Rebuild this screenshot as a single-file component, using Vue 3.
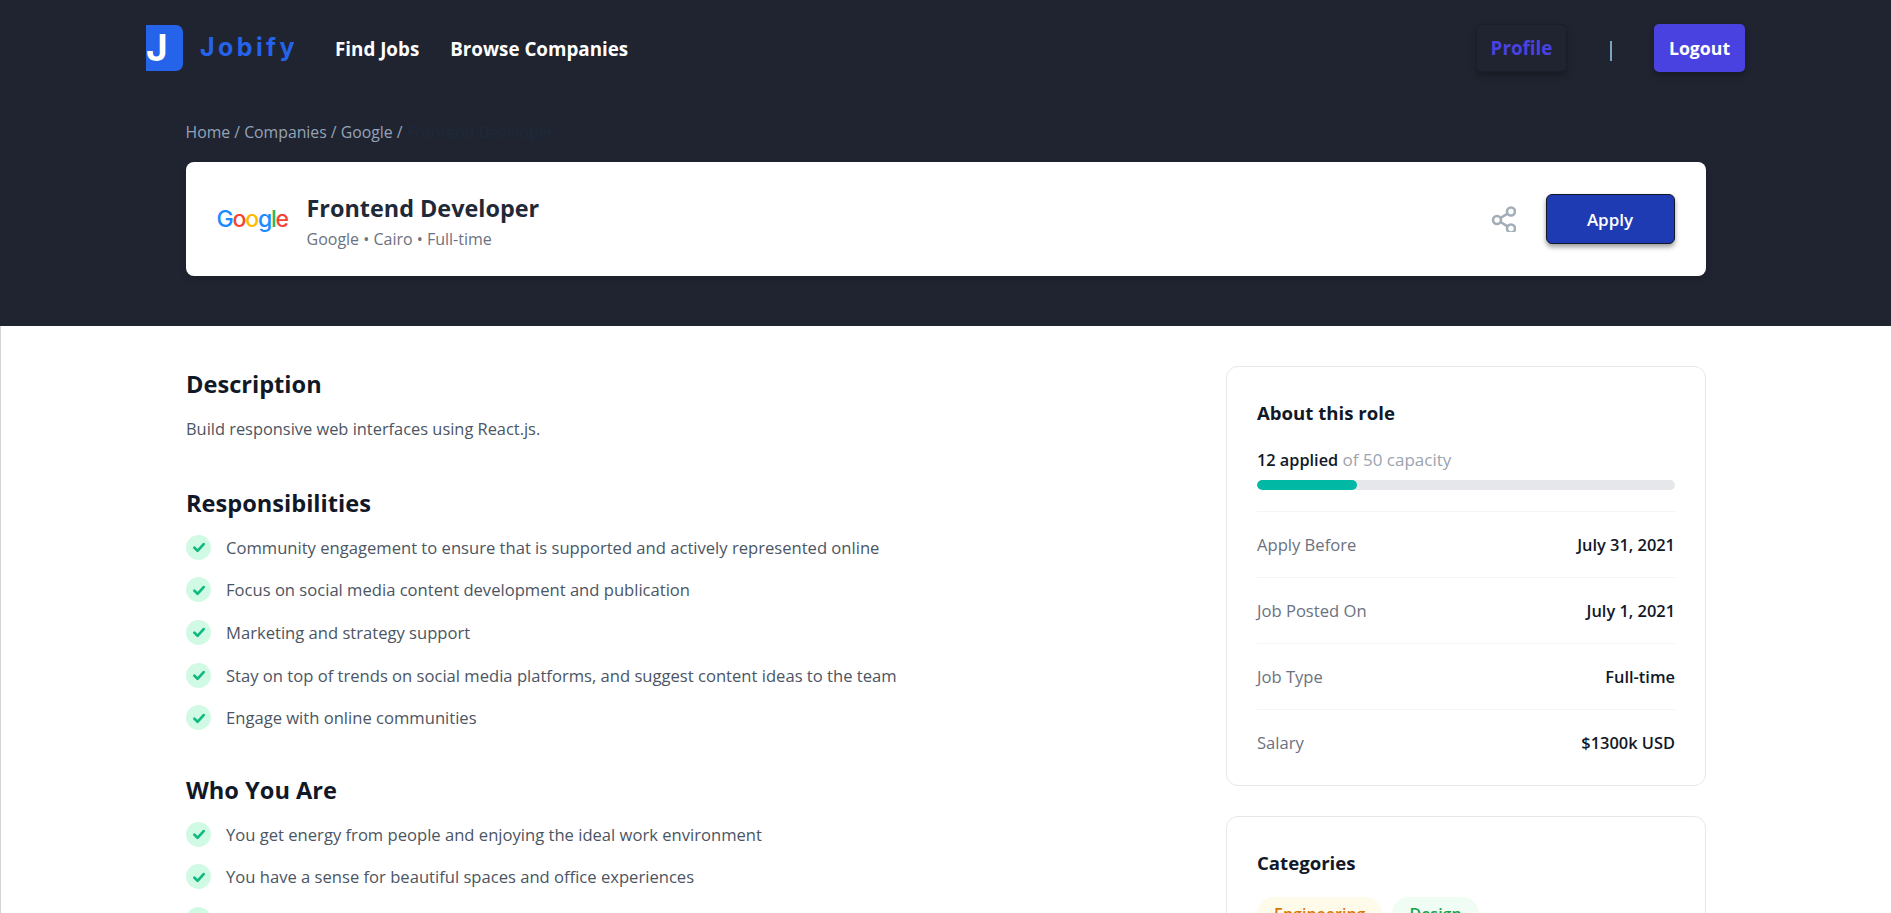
<template>
  <div class="page">
    <section class="hero">
      <header class="navbar">
        <div class="nav-left">
          <div class="logo">
            <span class="logo-mark"><span class="logo-j">J</span></span>
            <span class="logo-text">Jobify</span>
          </div>
          <nav class="nav-links">
            <a>Find Jobs</a>
            <a>Browse Companies</a>
          </nav>
        </div>
        <div class="nav-right">
          <button class="btn-profile">Profile</button>
          <span class="divider"></span>
          <button class="btn-logout">Logout</button>
        </div>
      </header>

      <div class="hero-inner">
        <div class="breadcrumb">
          Home / Companies / Google / <span class="crumb-current">Frontend Developer</span>
        </div>
        <div class="job-card">
          <div class="job-info">
            <div class="google">
              <span class="g-blue">G</span><span class="g-red">o</span><span class="g-yellow">o</span><span class="g-blue">g</span><span class="g-green">l</span><span class="g-red">e</span>
            </div>
            <div class="job-text">
              <h1 class="job-title">Frontend Developer</h1>
              <p class="job-sub">Google • Cairo • Full-time</p>
            </div>
          </div>
          <div class="job-actions">
            <svg class="share" viewBox="0 0 25 26" fill="none" stroke="currentColor" stroke-width="2.6">
              <circle cx="20" cy="5.5" r="4" />
              <circle cx="6" cy="14" r="4" />
              <circle cx="20" cy="22.5" r="4" />
              <path d="M9.5 12l7-4.4M9.5 16l7 4.4" />
            </svg>
            <button class="btn-apply">Apply</button>
          </div>
        </div>
      </div>
    </section>

    <main class="content">
      <div class="details">
        <section class="block">
          <h2>Description</h2>
          <p class="desc">Build responsive web interfaces using React.js.</p>
        </section>
        <section v-for="group in groups" :key="group.title" class="block">
          <h2>{{ group.title }}</h2>
          <ul class="checks">
            <li v-for="item in group.items" :key="item">
              <span class="tick">
                <svg viewBox="0 0 24 24" fill="none" stroke="currentColor" stroke-width="4.6" stroke-linecap="round" stroke-linejoin="round">
                  <path d="M4 13l5.5 5.5L20 7" />
                </svg>
              </span>
              {{ item }}
            </li>
          </ul>
        </section>
      </div>

      <aside class="sidebar">
        <div class="side-card about">
          <h3>About this role</h3>
          <p class="capacity"><strong>12 applied</strong> of 50 capacity</p>
          <div class="progress"><div class="progress-fill" :style="{ width: (12 / 50) * 100 + '%' }"></div></div>
          <div class="facts">
            <div v-for="row in facts" :key="row.label" class="fact">
              <span>{{ row.label }}</span>
              <strong>{{ row.value }}</strong>
            </div>
          </div>
        </div>
        <div class="side-card">
          <h3>Categories</h3>
          <div class="tags">
            <span class="tag tag-yellow">Engineering</span>
            <span class="tag tag-green">Design</span>
          </div>
        </div>
      </aside>
    </main>
  </div>
</template>

<script setup>
const groups = [
  {
    title: 'Responsibilities',
    items: [
      'Community engagement to ensure that is supported and actively represented online',
      'Focus on social media content development and publication',
      'Marketing and strategy support',
      'Stay on top of trends on social media platforms, and suggest content ideas to the team',
      'Engage with online communities'
    ]
  },
  {
    title: 'Who You Are',
    items: [
      'You get energy from people and enjoying the ideal work environment',
      'You have a sense for beautiful spaces and office experiences',
      'You are a confident office manager ready for added responsibilities'
    ]
  }
]

const facts = [
  { label: 'Apply Before', value: 'July 31, 2021' },
  { label: 'Job Posted On', value: 'July 1, 2021' },
  { label: 'Job Type', value: 'Full-time' },
  { label: 'Salary', value: '$1300k USD' }
]
</script>

<style>
html, body {
  margin: 0;
  height: 100%;
  overflow: hidden;
  background: #fff;
}
</style>

<style scoped>
.page {
  font-family: "Open Sans", "Noto Sans", sans-serif;
  border-left: 1px solid #d4d4d8;
  color: #111827;
}

.hero {
  background: #1f2430;
  height: 326px;
  margin-left: -1px;
}

.navbar {
  height: 96px;
  padding: 24px 146px 0;
  box-sizing: border-box;
  display: flex;
  justify-content: space-between;
  align-items: flex-start;
}

.nav-left {
  display: flex;
  align-items: center;
  height: 47px;
}

.logo {
  display: flex;
  align-items: center;
  gap: 17px;
}

.logo-mark {
  width: 37px;
  height: 46px;
  background: #2563eb;
  border-radius: 0 7px 7px 0;
  overflow: hidden;
  position: relative;
  display: block;
}

.logo-j {
  position: absolute;
  left: 0;
  top: 1px;
  color: #fff;
  font: 700 37px/44px Inter, sans-serif;
}

.logo-text {
  color: #2563eb;
  font: 700 25px/1 Inter, sans-serif;
  letter-spacing: 3.4px;
  width: 135px;
}

.nav-links {
  display: flex;
  gap: 31px;
  padding-top: 2px;
}

.nav-links a {
  color: #fff;
  font-size: 18.8px;
  font-weight: 700;
}

.nav-right {
  display: flex;
  align-items: center;
}

button {
  font-family: inherit;
  border: none;
  cursor: pointer;
}

.btn-profile,
.btn-logout {
  width: 91px;
  height: 48px;
  border-radius: 5px;
  font-weight: 700;
  box-shadow: 0 4px 6px rgba(0, 0, 0, 0.25);
}

.btn-profile {
  background: #1f2430;
  color: #4a42e0;
  border: 1px solid #1a1e29;
  font-size: 18.8px;
}

.btn-logout {
  background: #4a42e0;
  color: #fff;
  font-size: 17.7px;
}

.divider {
  width: 2px;
  height: 20px;
  background: #7aa3bd;
  margin: 6px 42px 0 43px;
}

.hero-inner {
  width: 1520px;
  margin: 0 auto;
}

.breadcrumb {
  color: #94a3b8;
  font-size: 15.8px;
  line-height: 24px;
  margin-top: 24px;
}

.crumb-current {
  color: #1e293b;
}

.job-card {
  margin-top: 18px;
  height: 114px;
  box-sizing: border-box;
  background: #fff;
  border-radius: 8px;
  box-shadow: 0 4px 6px rgba(0, 0, 0, 0.1);
  padding: 0 31px;
  display: flex;
  align-items: center;
  justify-content: space-between;
}

.job-info {
  display: flex;
  align-items: center;
  gap: 20px;
}

.google {
  width: 70px;
  font: 500 23px/1 Inter, sans-serif;
  letter-spacing: -1.2px;
}

.g-blue { color: #1a8cff; }
.g-red { color: #f44336; }
.g-yellow { color: #fbbc05; }
.g-green { color: #2cb55a; }

.job-text {
  padding-top: 4px;
}

.job-title {
  margin: 0;
  font-size: 23.4px;
  line-height: 32px;
  font-weight: 700;
  color: #1f2937;
}

.job-sub {
  margin: 4px 0 0;
  font-size: 16px;
  line-height: 22px;
  color: #6b7280;
}

.job-actions {
  display: flex;
  align-items: center;
  gap: 30px;
}

.share {
  width: 25px;
  height: 26px;
  color: #a3adb8;
}

.btn-apply {
  width: 129px;
  height: 50px;
  background: #1e3bb3;
  color: #fff;
  font-size: 17px;
  font-weight: 600;
  border: 1px solid #111827;
  border-radius: 6px;
  box-shadow: 0 3px 5px rgba(0, 0, 0, 0.4);
}

.content {
  width: 1520px;
  margin: 0 auto;
  padding-top: 40px;
  display: flex;
  justify-content: space-between;
  align-items: flex-start;
}

.details {
  width: 980px;
}

.block {
  margin-bottom: 33px;
}

h2 {
  margin: 0;
  font-size: 23.6px;
  line-height: 36px;
  font-weight: 700;
  color: #111827;
}

.desc {
  margin: 14px 0 0;
  padding-bottom: 10px;
  font-size: 16.4px;
  line-height: 26px;
  color: #4b5563;
}

.checks {
  list-style: none;
  margin: 5px 0 0;
  padding: 0;
}

.checks li {
  display: flex;
  align-items: center;
  gap: 15px;
  height: 42.6px;
  font-size: 16.6px;
  color: #4b5563;
}

.tick {
  width: 25px;
  height: 25px;
  flex-shrink: 0;
  border-radius: 50%;
  background: #d1fae5;
  color: #10b981;
  display: flex;
  align-items: center;
  justify-content: center;
}

.tick svg {
  width: 14px;
  height: 14px;
}

.sidebar {
  width: 480px;
  display: flex;
  flex-direction: column;
  gap: 30px;
}

.side-card {
  border: 1px solid #e5e7eb;
  border-radius: 12px;
  box-sizing: border-box;
  padding: 32px 30px 10px;
}

h3 {
  margin: 0;
  font-size: 18.6px;
  line-height: 28px;
  font-weight: 700;
  color: #111827;
}

.capacity {
  margin: 21px 0 0;
  font-size: 17px;
  line-height: 24px;
  color: #9ca3af;
}

.capacity strong {
  color: #111827;
  font-size: 16.3px;
  font-weight: 600;
}

.progress {
  margin-top: 8px;
  height: 10px;
  background: #e5e7eb;
  border-radius: 5px;
  overflow: hidden;
}

.progress-fill {
  height: 100%;
  background: #00b8a3;
  border-radius: 5px;
}

.facts {
  margin-top: 21px;
}

.fact {
  border-top: 1px solid #f3f4f6;
  height: 66px;
  box-sizing: border-box;
  display: flex;
  align-items: center;
  justify-content: space-between;
  font-size: 16.6px;
  color: #6b7280;
}

.fact strong {
  color: #111827;
  font-size: 16.4px;
  font-weight: 600;
}

.tags {
  margin-top: 20px;
  display: flex;
  gap: 10px;
}

.tag {
  padding: 6px 17px;
  border-radius: 20px;
  font-size: 16px;
  font-weight: 600;
}

.tag-yellow {
  background: #fffbeb;
  color: #d97706;
}

.tag-green {
  background: #f0fdf4;
  color: #16a34a;
}
</style>
